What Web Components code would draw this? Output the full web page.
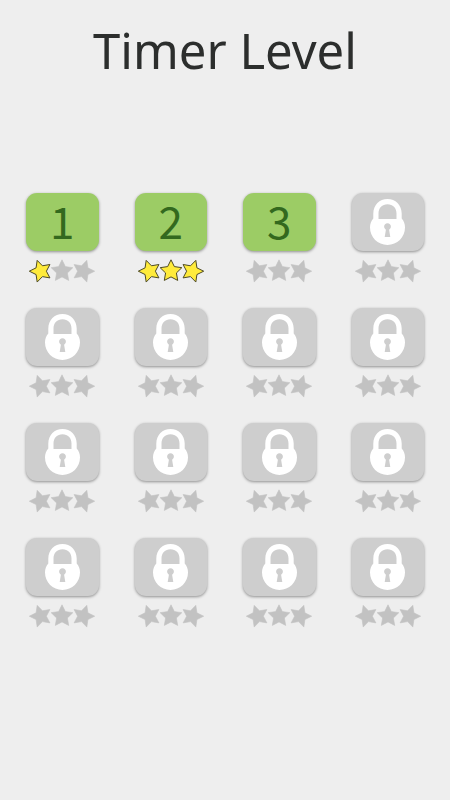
<!DOCTYPE html>
<html lang="en">
<head>
<meta charset="utf-8">
<meta name="viewport" content="width=device-width, initial-scale=1">
<title>Timer Level</title>
<style>
  body { margin: 0; min-height: 100vh; background: #eeeeee; font-family: "Noto Sans", sans-serif; }
</style>
</head>
<body>
<level-screen heading="Timer Level">
  <level-tile level="1" stars="1"></level-tile>
  <level-tile level="2" stars="3"></level-tile>
  <level-tile level="3"></level-tile>
  <level-tile></level-tile>
  <level-tile></level-tile>
  <level-tile></level-tile>
  <level-tile></level-tile>
  <level-tile></level-tile>
  <level-tile></level-tile>
  <level-tile></level-tile>
  <level-tile></level-tile>
  <level-tile></level-tile>
  <level-tile></level-tile>
  <level-tile></level-tile>
  <level-tile></level-tile>
  <level-tile></level-tile>
</level-screen>
<script>
  class LevelScreen extends HTMLElement {
    constructor() {
      super();
      this.attachShadow({ mode: 'open' }).innerHTML = `
        <style>
          :host { display: block; }
          h1 { margin: 0; padding-top: 18px; text-align: center; font-size: 49px; line-height: 64px;
               font-weight: 400; color: #2c2e2d; }
          main { display: grid; grid-template-columns: repeat(4, 1fr); column-gap: 36px; row-gap: 25px;
                 padding: 111px 26px 24px; }
        </style>
        <h1></h1>
        <main><slot></slot></main>`;
    }
    connectedCallback() {
      this.shadowRoot.querySelector('h1').textContent = this.getAttribute('heading');
    }
  }

  class LockIcon extends HTMLElement {
    constructor() {
      super();
      this.attachShadow({ mode: 'open' }).innerHTML = `
        <style>
          :host { display: block; width: 35px; height: 46px; }
          svg { display: block; width: 100%; height: 100%; }
        </style>
        <svg viewBox="0 0 35 46" aria-hidden="true">
          <path fill="#fff" fill-rule="evenodd" d="M3.3 19.5V14.5C3.3 6 9.5 0 17.5 0S31.7 6 31.7 14.5V19.5
            C34 22 35 25.2 35 28.6C35 38.4 27.2 46 17.5 46S0 38.4 0 28.6C0 25.2 1 22 3.3 19.5Z
            M8.5 20H26.5V14.5C26.5 9 22.8 5.3 17.5 5.3S8.5 9 8.5 14.5Z
            M15.9 30.7L14.7 38H20.3L19.1 30.7A3.4 3.4 0 1 0 15.9 30.7Z"/>
        </svg>`;
    }
  }

  class StarRating extends HTMLElement {
    static observedAttributes = ['value'];
    constructor() {
      super();
      this.attachShadow({ mode: 'open' });
    }
    connectedCallback() { this.render(); }
    attributeChangedCallback() { this.render(); }
    star(cx, cy, radius, turn) {
      const points = [];
      for (let i = 0; i < 10; i++) {
        const r = i % 2 ? radius * 0.5 : radius;
        const a = (turn - 90 + i * 36) * Math.PI / 180;
        points.push((cx + r * Math.cos(a)).toFixed(2) + ',' + (cy + r * Math.sin(a)).toFixed(2));
      }
      return points.join(' ');
    }
    render() {
      const value = Number(this.getAttribute('value') || 0);
      const shapes = [[12.7, 12.2, 11.4, -18], [34, 12.2, 11.4, 0], [55.3, 12.2, 11.4, 18]];
      this.shadowRoot.innerHTML = `
        <style>
          :host { display: block; width: 68px; height: 24px; }
          svg { display: block; width: 100%; height: 100%; overflow: visible; }
          polygon { fill: #c2c2c2; stroke: #c2c2c2; stroke-width: 0.6; stroke-linejoin: round; }
          .won { fill: #ffeb3b; stroke: #4d4a26; stroke-width: 1; }
        </style>
        <svg viewBox="0 0 68 24" role="img" aria-label="${value} of 3 stars">
          ${shapes.map((s, i) => `<polygon class="${i < value ? 'won' : ''}" points="${this.star(...s)}"/>`).join('')}
        </svg>`;
    }
  }

  class LevelTile extends HTMLElement {
    constructor() {
      super();
      this.attachShadow({ mode: 'open' });
    }
    connectedCallback() {
      const level = this.getAttribute('level');
      this.shadowRoot.innerHTML = `
        <style>
          :host { display: flex; flex-direction: column; align-items: center; gap: 8px; }
          button { display: flex; align-items: center; justify-content: center; width: 100%; height: 58px;
                   margin: 0; padding: 0; border: 0; border-radius: 11px; background: #9ccc65; color: #33691e;
                   font-family: "Noto Sans CJK SC", "Noto Sans", sans-serif; font-size: 44px; line-height: 54px;
                   box-shadow: 0 1px 3px rgba(0, 0, 0, .4); cursor: pointer; }
          button:enabled { padding-bottom: 4px; }
          button:disabled { background: #cecece; cursor: default; }
        </style>
        <button type="button" ${level ? '' : 'disabled aria-label="Locked level"'}>${level || '<lock-icon></lock-icon>'}</button>
        <star-rating value="${this.getAttribute('stars') || 0}"></star-rating>`;
    }
  }

  customElements.define('lock-icon', LockIcon);
  customElements.define('star-rating', StarRating);
  customElements.define('level-tile', LevelTile);
  customElements.define('level-screen', LevelScreen);
</script>
</body>
</html>
